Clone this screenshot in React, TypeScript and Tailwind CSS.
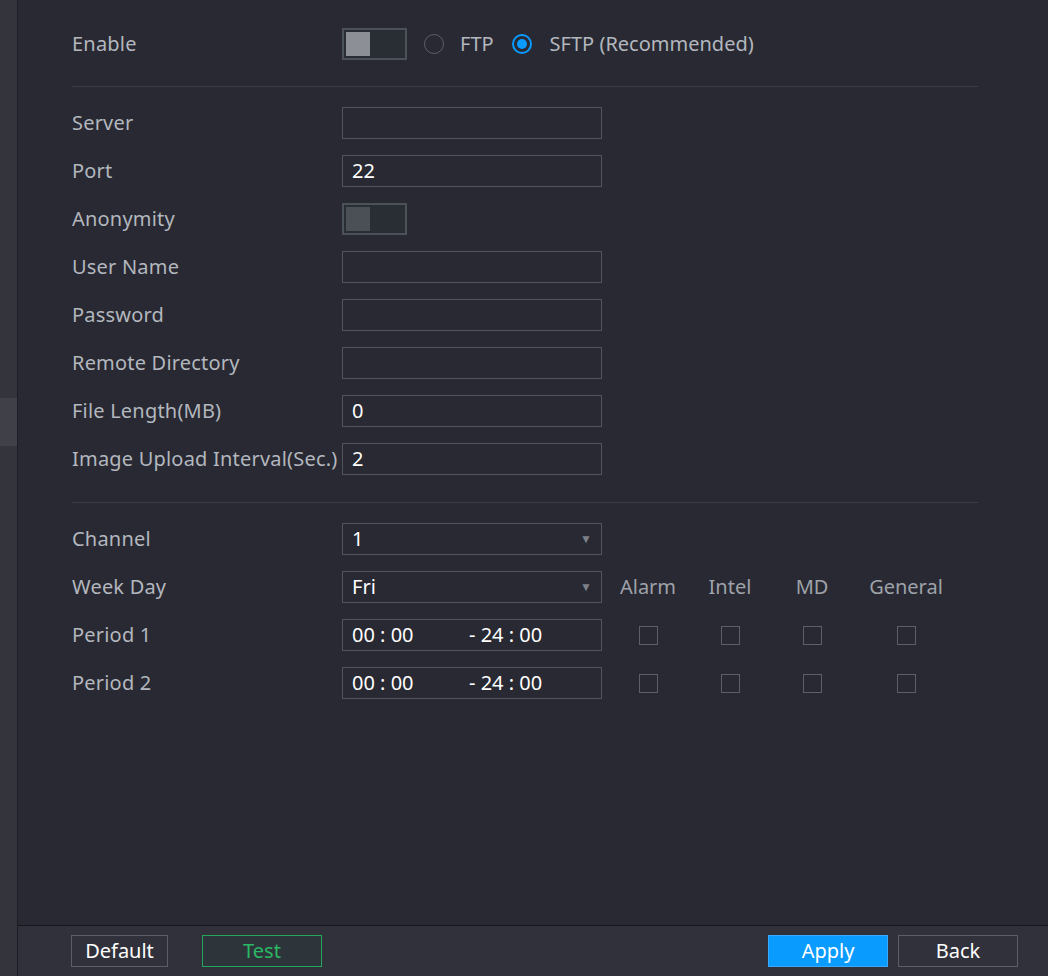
import React from 'react';

const Label = ({ children }: { children: React.ReactNode }) => (
  <div className="w-[270px] shrink-0 text-[20px] text-[#b3b7be] tracking-[0.2px]">{children}</div>
);

const Input = ({ value = '' }: { value?: string }) => (
  <div className="w-[260px] h-[32px] border border-[#50555c] px-[9px] flex items-center text-[20px] text-white">
    {value}
  </div>
);

const Toggle = ({ dim }: { dim?: boolean }) => (
  <div className="w-[65px] h-[32px] border-2 border-[#4a5258] bg-[#292e35] p-[2px] flex">
    <div className={`w-[24px] h-full ${dim ? 'bg-[#4b5057]' : 'bg-[#8c9096]'}`} />
  </div>
);

const Select = ({ value }: { value: string }) => (
  <div className="w-[260px] h-[32px] border border-[#50555c] px-[9px] flex items-center justify-between text-[20px] text-white">
    <span>{value}</span>
    <span className="text-[12px] text-[#7d8187]">▼</span>
  </div>
);

const TimeBox = () => (
  <div className="w-[260px] h-[32px] border border-[#50555c] px-[9px] flex items-center text-[20px] text-white">
    <span className="w-[117px]">00 : 00</span>
    <span>- 24 : 00</span>
  </div>
);

const cols = ['Alarm', 'Intel', 'MD', 'General'];
const colW = ['w-[92px]', 'w-[72px]', 'w-[92px]', 'w-[96px]'];

const Checks = () => (
  <div className="flex">
    {cols.map((c, i) => (
      <div key={c} className={`${colW[i]} flex justify-center`}>
        <div className="w-[19px] h-[19px] border border-[#5b5f66]" />
      </div>
    ))}
  </div>
);

const Row = ({ label, children }: { label: string; children: React.ReactNode }) => (
  <div className="flex items-center h-[48px]">
    <Label>{label}</Label>
    {children}
  </div>
);

export default function App() {
  return (
    <div className="w-[1048px] h-[976px] flex bg-[#282932]" style={{ fontFamily: '"Noto Sans", sans-serif' }}>
      <div className="w-[18px] shrink-0 bg-[#33343c] border-r border-[#1d1e24] flex flex-col">
        <div className="h-[398px]" />
        <div className="h-[48px] bg-[#3f4048]" />
      </div>
      <div className="flex-1 flex flex-col">
        <div className="flex-1 pl-[54px] pr-[70px] pt-[20px]">
          <div className="flex items-center h-[48px]">
            <Label>Enable</Label>
            <Toggle />
            <div className="flex items-center ml-[17px] gap-[16px] text-[20px] text-[#b3b7be]">
              <div className="w-[20px] h-[20px] rounded-full border border-[#5b5f66]" />
              <span>FTP</span>
              <div className="w-[20px] h-[20px] rounded-full border-2 border-[#0a9bff] flex items-center justify-center ml-[2px]">
                <div className="w-[10px] h-[10px] rounded-full bg-[#0a9bff]" />
              </div>
              <span className="ml-[2px]">SFTP (Recommended)</span>
            </div>
          </div>
          <div className="border-t border-[#3b3d45] mt-[18px] mb-[12px]" />
          <Row label="Server"><Input /></Row>
          <Row label="Port"><Input value="22" /></Row>
          <Row label="Anonymity"><Toggle dim /></Row>
          <Row label="User Name"><Input /></Row>
          <Row label="Password"><Input /></Row>
          <Row label="Remote Directory"><Input /></Row>
          <Row label="File Length(MB)"><Input value="0" /></Row>
          <Row label="Image Upload Interval(Sec.)"><Input value="2" /></Row>
          <div className="border-t border-[#3b3d45] mt-[19px] mb-[12px]" />
          <Row label="Channel"><Select value="1" /></Row>
          <Row label="Week Day">
            <Select value="Fri" />
            <div className="flex text-[20px] text-[#9ea2a9]">
              {cols.map((c, i) => (
                <div key={c} className={`${colW[i]} text-center`}>{c}</div>
              ))}
            </div>
          </Row>
          <Row label="Period 1"><TimeBox /><Checks /></Row>
          <Row label="Period 2"><TimeBox /><Checks /></Row>
        </div>
        <div className="h-[51px] bg-[#30313a] border-t border-[#16171c] flex items-center pl-[53px] pr-[30px] text-[20px]">
          <button className="w-[97px] h-[32px] border border-[#5c5e66] text-white">Default</button>
          <button className="w-[120px] h-[32px] border border-[#23a55a] bg-[#2d353b] text-[#2bb865] ml-[34px]">Test</button>
          <div className="flex-1" />
          <button className="w-[120px] h-[32px] bg-[#0a9bff] border border-[#3aa8ff] text-white">Apply</button>
          <button className="w-[120px] h-[32px] border border-[#5c5e66] text-white ml-[10px]">Back</button>
        </div>
      </div>
    </div>
  );
}
